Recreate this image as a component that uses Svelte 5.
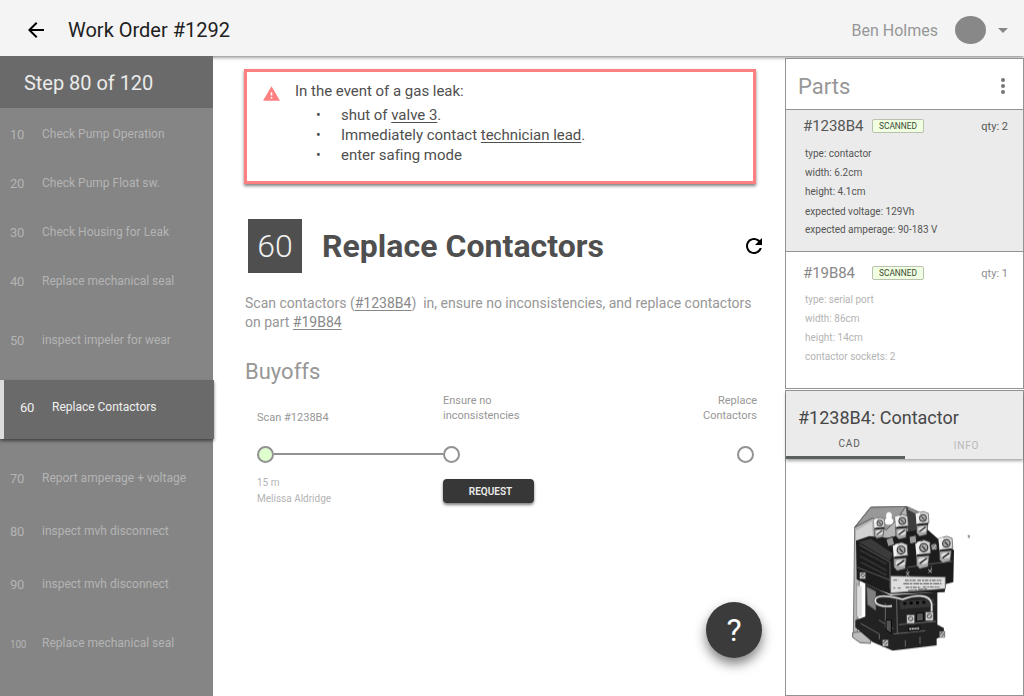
<script>
  const steps = [
    { n: 10, label: 'Check Pump Operation', size: 'short' },
    { n: 20, label: 'Check Pump Float sw.', size: 'short' },
    { n: 30, label: 'Check Housing for Leak', size: 'short' },
    { n: 40, label: 'Replace mechanical seal', size: 'short' },
    { n: 50, label: 'inspect impeler for wear', size: 'tall' },
    { n: 60, label: 'Replace Contactors', size: 'active' },
    { n: 70, label: 'Report amperage + voltage', size: 'mid' },
    { n: 80, label: 'inspect mvh disconnect', size: 'mid' },
    { n: 90, label: 'inspect mvh disconnect', size: 'mid' },
    { n: 100, label: 'Replace mechanical seal', size: 'last' }
  ];

  const parts = [
    {
      id: '#1238B4', qty: 2, selected: true,
      specs: ['type: contactor', 'width: 6.2cm', 'height: 4.1cm', 'expected voltage: 129Vh', 'expected amperage: 90-183 V']
    },
    {
      id: '#19B84', qty: 1, selected: false,
      specs: ['type: serial port', 'width: 86cm', 'height: 14cm', 'contactor sockets: 2']
    }
  ];

  const terminals = [
    [117, 99, 0.8], [184, 93, 0.95], [246, 84, 0.95],
    [180, 180, 1.08], [248, 173, 1.1], [316, 160, 1.02]
  ];
  const smallScrews = [[68, 256, 9], [212, 386, 12], [268, 378, 12], [136, 458, 9], [306, 432, 8], [283, 170, 7]];
</script>

<div class="app">
  <header>
    <svg class="back" viewBox="0 0 24 24"><path d="M20 11H7.83l5.59-5.59L12 4l-8 8 8 8 1.41-1.41L7.83 13H20v-2z" /></svg>
    <h1>Work Order #1292</h1>
    <span class="user">Ben Holmes</span>
    <span class="avatar"></span>
    <svg class="caret" viewBox="0 0 10 5"><path d="M0 0h10L5 5z" /></svg>
  </header>

  <div class="body">
    <aside>
      <div class="progress">Step 80 of 120</div>
      <ol>
        {#each steps as s}
          <li class={s.size}><span class="num">{s.n}</span><span>{s.label}</span></li>
        {/each}
      </ol>
    </aside>

    <main>
      <section class="alert">
        <svg class="warn" viewBox="1 2 22 19"><path d="M1 21h22L12 2 1 21zm12-3h-2v-2h2v2zm0-4h-2v-4h2v4z" /></svg>
        <div>
          <p>In the event of a gas leak:</p>
          <ul>
            <li>shut of <u>valve 3</u>.</li>
            <li>Immediately contact <u>technician lead</u>.</li>
            <li>enter safing mode</li>
          </ul>
        </div>
      </section>

      <div class="title">
        <span class="badge">60</span>
        <h2>Replace Contactors</h2>
        <svg class="refresh" viewBox="4 4 16 16"><path d="M17.65 6.35C16.2 4.9 14.21 4 12 4c-4.42 0-7.99 3.58-7.99 8s3.57 8 7.99 8c3.73 0 6.84-2.55 7.73-6h-2.08c-.82 2.33-3.04 4-5.65 4-3.31 0-6-2.69-6-6s2.69-6 6-6c1.66 0 3.14.69 4.22 1.78L13 11h7V4l-2.35 2.35z" /></svg>
      </div>

      <p class="desc">Scan contactors (<u>#1238B4</u>)&nbsp; in, ensure no inconsistencies, and replace contactors<br />on part <u>#19B84</u></p>

      <h3 class="section-title">Buyoffs</h3>
      <div class="buyoffs">
        <div class="stage first">
          <div class="name">Scan #1238B4</div>
          <div class="track"><i class="dot done"></i><i class="line"></i></div>
          <div class="meta">15 m<br />Melissa Aldridge</div>
        </div>
        <div class="stage second">
          <div class="name">Ensure no<br />inconsistencies</div>
          <div class="track"><i class="dot"></i></div>
          <button class="request">REQUEST</button>
        </div>
        <div class="stage third">
          <div class="name">Replace<br />Contactors</div>
          <div class="track"><i class="dot"></i></div>
        </div>
      </div>
      <button class="help">?</button>
    </main>

    <div class="side">
      <section class="parts">
        <div class="parts-head">
          <h3>Parts</h3>
          <svg viewBox="0 0 4 16"><circle cx="2" cy="2" r="2" /><circle cx="2" cy="8" r="2" /><circle cx="2" cy="14" r="2" /></svg>
        </div>
        {#each parts as p}
          <article class:selected={p.selected}>
            <div class="row">
              <span class="pid">{p.id}</span><span class="tag">SCANNED</span><span class="qty">qty: {p.qty}</span>
            </div>
            <ul>
              {#each p.specs as spec}<li>{spec}</li>{/each}
            </ul>
          </article>
        {/each}
      </section>

      <section class="detail">
        <div class="detail-head">
          <h4>#1238B4: Contactor</h4>
          <div class="tabs"><span class="tab on">CAD</span><span class="tab">INFO</span></div>
        </div>
        <div class="viewer">
          <svg viewBox="0 0 420 510" stroke-linejoin="round">
            <defs>
              <filter id="rough" x="0" y="0" width="100%" height="100%">
                <feTurbulence type="fractalNoise" baseFrequency="0.22" numOctaves="2" seed="4" result="n" />
                <feDisplacementMap in="SourceGraphic" in2="n" scale="3" xChannelSelector="R" yChannelSelector="G" />
              </filter>
            </defs>
            <g filter="url(#rough)">
              <!-- mounting plate -->
              <path d="M44 112 92 52 198 48 258 76 262 150 100 210 58 270 52 440 40 440z" fill="#b5b5b5" stroke="#777" stroke-width="3" />
              <path d="M92 52 198 48 170 90 138 120 98 84 44 112z" fill="#989898" stroke="#555" stroke-width="3" />
              <path d="M48 122 96 94 98 145 58 155 50 260z" fill="#d2d2d2" />
              <path d="M198 50 256 78 260 135 205 130z" fill="#3c3c3c" />
              <path d="M204 56 238 74" stroke="#999" stroke-width="5" />
              <path d="M147 66c9 0 10 12 7 18 10 6 8 20-7 20s-17-14-7-20c-3-6-2-18 7-18z" fill="#fff" />
              <path d="M38 428 68 424 92 444 92 460 60 458 38 442z" fill="#bcbcbc" stroke="#666" stroke-width="3" />
              <!-- housing -->
              <path d="M48 152 88 138 150 144 200 124 262 118 300 152 342 180 340 276 318 282 314 306 152 312 118 300 50 268z" fill="#1d1d1d" />
              <path d="M56 156 92 146 158 190 150 212z" fill="#3b3b3b" />
              <path d="M58 164 150 216 150 296M52 232 150 270M202 232 268 222 338 214M202 236v18M274 226v20" fill="none" stroke="#5c5c5c" stroke-width="3" />
              <path d="M60 180 140 222M60 198 140 242M62 216 140 256" stroke="#363636" stroke-width="5" />
              <path d="M76 280 118 300 152 316 292 306 292 404 312 414 310 438 290 446 290 466 158 482 98 456 46 412 46 390 76 380z" fill="#222" />
              <path d="M80 290 108 304 108 362 82 344z" fill="#808080" stroke="#444" stroke-width="2" />
              <path d="M58 288v92" stroke="#ddd" stroke-width="15" />
              <path d="M50 278v110" stroke="#999" stroke-width="3" />
              <path d="M62 400 118 432 118 448M170 326 172 430M182 352 284 342M176 404 288 394M160 432 256 422M196 450v20M240 440v22M116 390 160 416M136 340v75" fill="none" stroke="#696969" stroke-width="3" />
              <path d="M178 334 282 326 284 350 180 358z" fill="#343434" />
              <path d="M190 340h9m10-1h9m10-1h9m10-1h9" stroke="#050505" stroke-width="8" />
              <path d="M138 390 154 390 154 430 138 420zM230 370 250 368 250 392 230 394zM206 412 240 408 240 420 206 424z" fill="#555" stroke="#090909" stroke-width="3" />
              <path d="M208 416h30" stroke="#ccc" stroke-width="4" stroke-dasharray="5 3" />
              <!-- terminals -->
              {#each terminals as [x, y, k]}
                <g transform="translate({x} {y}) scale({k})">
                  <path d="M-18 18-17 48-8 58 15 52 19 14z" fill="#a5a5a5" stroke="#2c2c2c" stroke-width="2" />
                  <path d="M-20-14 4-21 20-15 22 15-17 20z" fill="#d2d2d2" stroke="#4a4a4a" stroke-width="2" />
                  <path d="M-20-14-6-18-10 16-17 20z" fill="#f2f2f2" />
                  <circle cx="3" r="11" fill="#a6a6a6" stroke="#2b2b2b" stroke-width="3" />
                  <path d="M-2-5 8 6" stroke="#222" stroke-width="3" />
                  <ellipse cx="1" cy="36" rx="13" ry="9" fill="#dcdcdc" />
                  <path d="M-8 43 11 29" stroke="#222" stroke-width="4" />
                  <path d="M-16 22 19 19" stroke="#1b1b1b" stroke-width="5" />
                </g>
              {/each}
              <path d="M138 148 158 140 164 164 144 170zM207 140 228 135 230 158 210 162zM270 165 286 158 294 176 276 182z" fill="#999" stroke="#222" stroke-width="3" />
              <path d="M198 246 208 258M208 244 199 258M264 238 275 248M275 236 266 248" stroke="#aaa" stroke-width="3" />
              <!-- rating plate -->
              <path d="M152 258 316 261 316 296 152 309z" fill="#dedede" stroke="#666" stroke-width="2" />
              <path d="M160 270h15m20 1h32m5 0h72M160 294h6m7 0h9m15-2h45m6-1h50" stroke="#777" stroke-width="4" stroke-dasharray="11 3 6 2" />
              <path d="M190 281h114M204 302l60-5" stroke="#666" stroke-width="4" stroke-dasharray="17 2 8 3" />
              <!-- coil lead -->
              <path d="M156 348C120 352 102 341 106 328 112 313 153 319 188 328 225 314 270 310 275 342V370" fill="none" stroke="#444" stroke-width="9" />
              <path d="M156 348C120 352 102 341 106 328 112 313 153 319 188 328 225 314 270 310 275 342V370" fill="none" stroke="#dedede" stroke-width="5" />
              {#each smallScrews as [x, y, r]}
                <g transform="translate({x} {y})">
                  <rect x={-r} y={-r} width={r * 2} height={r * 2.2} fill="#d8d8d8" stroke="#333" stroke-width="2" />
                  <circle r={r * 0.6} fill="#999" stroke="#333" stroke-width="2" />
                  <path d="M-4 4 5-4" stroke="#fff" stroke-width="2" />
                </g>
              {/each}
              <path d="M384 136l4 2-2 6" fill="none" stroke="#666" stroke-width="4" />
            </g>
          </svg>
        </div>
      </section>
    </div>
  </div>
</div>

<style>
  :global(body) { background: #fff; }
  .app { width: 1024px; height: 696px; overflow: hidden; font-family: Roboto, "Liberation Sans", sans-serif; color: #4f4f4f; display: flex; flex-direction: column; }
  :is(h1, h2, h3, h4, p, ul, ol) { margin: 0; padding: 0; font-weight: 400; list-style: none; }
  button { border: 0; padding: 0; font-family: inherit; }
  svg { display: block; flex: none; }

  header { flex: none; height: 56px; box-sizing: border-box; padding: 4px 16px 0 24px; display: flex; align-items: center; background: #f4f4f4; box-shadow: 0 1px 4px rgba(0, 0, 0, 0.55); }
  .back { width: 24px; height: 24px; margin-right: 20px; }
  header h1 { font-size: 20px; color: #212121; }
  .user { margin-left: auto; font-size: 16px; color: #979797; }
  .avatar { width: 31px; height: 28px; margin: 0 12px 0 17px; border-radius: 50%; background: #888; }
  .caret { width: 10px; height: 5px; fill: #888; }

  .body { flex: 1; min-height: 0; display: flex; }
  aside { position: relative; width: 213px; flex: none; background: #858585; }
  .progress { height: 52px; line-height: 54px; padding-left: 24px; background: #6a6a6a; color: #ebebeb; font-size: 20px; letter-spacing: -0.03px; }
  ol { width: 214px; }
  ol li { display: flex; align-items: center; box-sizing: border-box; padding-left: 10px; height: 49px; font-size: 12px; color: #b4b4b4; }
  ol li:first-child { height: 50px; padding-top: 1px; }
  .num { width: 32px; flex: none; font-size: 13px; letter-spacing: -0.2px; padding-top: 1px; }
  ol .tall { height: 69px; margin-bottom: 6px; }
  ol .mid { height: 53px; }
  ol .active { height: 59px; margin-bottom: 12px; padding: 0 0 5px 16px; border-left: 4px solid #dcdcdc; background: #6a6a6a; color: #f0f0f0; box-shadow: 0 2px 3px rgba(0, 0, 0, 0.5); }
  ol .last { height: 65px; }
  .last .num { font-size: 10px; padding-top: 4px; }

  main { position: relative; width: 572px; box-sizing: border-box; padding: 13px 0 0 31px; }
  .alert { width: 512px; height: 115px; box-sizing: border-box; border: 3px solid #ff8080; box-shadow: 0 2px 3px rgba(0, 0, 0, 0.5); display: flex; padding: 9px 16px; font-size: 15px; line-height: 20px; letter-spacing: -0.02px; }
  .warn { width: 17px; height: 15px; fill: #ff8080; margin: 5px 15px 0 0; }
  .alert ul { padding: 4px 0 0 46px; }
  .alert li { display: flex; white-space: pre; }
  .alert li::before { content: "•"; width: 25px; margin-left: -25px; font-size: 14px; }
  u { text-underline-offset: 2px; text-decoration-thickness: 1px; }

  .title { display: flex; align-items: center; height: 54px; margin: 35px 0 0 4px; }
  .badge { width: 54px; line-height: 54px; background: #4f4f4f; color: #f0f0f0; text-align: center; font-size: 32px; font-weight: 300; }
  .title h2 { margin-left: 20px; font-size: 32px; font-weight: 700; width: 424px; letter-spacing: 0.03px; }
  .refresh { width: 16px; height: 16px; }
  main .desc { margin: 21px 0 0 1px; white-space: nowrap; font-size: 14px; line-height: 19px; color: #979797; }
  .desc u { color: #888; }
  h3 { font-size: 22px; color: #979797; }
  main .section-title { line-height: 26px; margin: 27px 0 0 1px; }

  .buyoffs { display: flex; margin: 8px 28px 0 13px; color: #979797; }
  .name { height: 52px; font-size: 11px; line-height: 15px; }
  .track { display: flex; align-items: center; height: 18px; }
  .dot { width: 17px; height: 17px; flex: none; box-sizing: border-box; border: 2px solid #929292; border-radius: 50%; background: #fff; }
  .done { background: #e0ffcf; }
  .line { flex: 1; height: 2px; background: #929292; }
  .first { width: 186px; flex: none; }
  .first .name { box-sizing: border-box; padding-top: 17px; }
  .meta { padding-top: 12px; font-size: 10px; line-height: 16px; color: #b4b4b4; }
  .request { display: block; width: 91px; height: 24px; margin-top: 16px; padding-left: 4px; border-radius: 4px; background: #373737; color: #ececec; font-size: 10px; font-weight: 600; box-shadow: 0 2px 3px rgba(0, 0, 0, 0.5); }
  .third { margin-left: auto; text-align: right; }
  .third .track { justify-content: flex-end; padding-right: 3px; }
  .help { position: absolute; left: 493px; top: 546px; width: 56px; height: 56px; border-radius: 50%; background: #3b3b3b; color: #fff; font-size: 32px; font-weight: 400; box-shadow: 0 6px 12px rgba(0, 0, 0, 0.5); }

  .side { position: relative; width: 239px; flex: none; box-sizing: border-box; padding-top: 2px; display: flex; flex-direction: column; gap: 1px; }
  .side section { box-sizing: border-box; border: 1px solid #939393; background: #fff; }
  .parts { height: 331px; }
  .parts-head { display: flex; height: 50px; padding: 4px 18px 0 12px; box-sizing: border-box; justify-content: space-between; align-items: center; }
  .parts-head svg { width: 4px; height: 16px; fill: #757575; }
  article { height: 136px; padding: 7px 15px 0 18px; box-sizing: border-box; color: #b4b4b4; }
  .selected { height: 143px; border: solid #939393; border-width: 1px 0; background: #ebebeb; color: #565656; margin-bottom: 5px; }
  article .row { display: flex; align-items: center; height: 19px; }
  .pid { width: 69px; margin: -1px 0 0 -1px; font-size: 15px; letter-spacing: -0.05px; color: #888; }
  .qty { margin-left: auto; font-size: 11px; color: #8e8e8e; }
  .selected .pid, .selected .qty { color: #565656; }
  .tag { width: 52px; height: 14px; box-sizing: border-box; border: 1px solid #b8c2ae; border-radius: 2px; background: #f0ffe2; color: #3c4a34; font-size: 8.4px; line-height: 13px; text-align: center; margin-top: -1px; }
  article ul { padding: 7px 0 0 1px; font-size: 10px; line-height: 19px; }
  .selected ul { padding-top: 8px; }
  .selected li:nth-child(4) { padding-top: 1px; margin-bottom: -1px; }
  .detail { height: 306px; }
  .detail-head { height: 68px; padding-top: 16px; box-sizing: border-box; background: #ebebeb; box-shadow: 0 2px 3px rgba(0, 0, 0, 0.35); display: flex; flex-direction: column; }
  .detail h4 { padding-left: 12px; font-size: 18px; line-height: 22px; color: #474747; }
  .tabs { display: flex; flex: 1; }
  .tab { flex: 1; box-sizing: border-box; padding: 3px 0 0 5px; text-align: center; font-size: 10px; line-height: 27px; letter-spacing: 0.8px; color: #b8b8b8; }
  .tabs .on { flex: 0 0 119px; border-bottom: 3px solid #5d615d; color: #5d5d5d; padding: 2px 0 0 8px; line-height: 25px; }
  .viewer { padding: 31px 0 0 54px; }
  .viewer svg { width: 140px; height: 170px; }
</style>
